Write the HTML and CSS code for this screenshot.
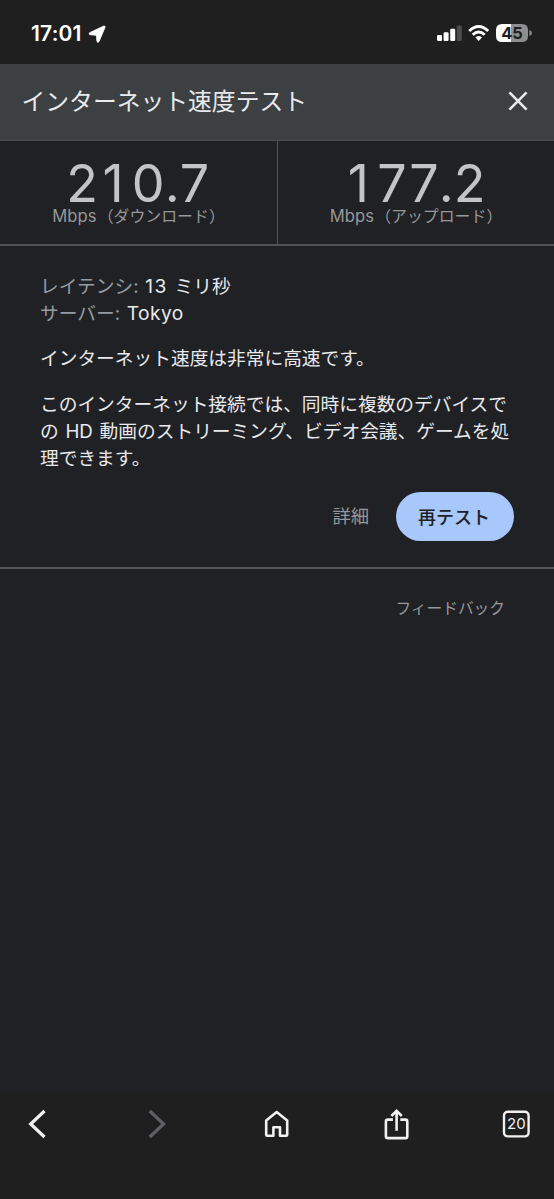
FILE: index.html
```html
<!DOCTYPE html>
<html lang="ja">
<head>
<meta charset="utf-8">
<title>インターネット速度テスト</title>
<link rel="stylesheet" href="styles.css">
</head>
<body>
<div class="screen">
  <div class="status">
    <span class="clock">17:01</span>
    <svg class="location" width="18" height="18" viewBox="0 0 18 18"><path d="M1.6 7.7 15.7 1.1Q17.6.6 17 2.5L11 16.6Q9.8 18.2 8.9 16.5L8.4 10.3 2 9.7Q.2 9 1.6 7.7Z" fill="#fff" stroke="#fff" stroke-width=".8"/></svg>
    <svg class="signals" width="96" height="20" viewBox="0 0 96 20">
      <g fill="#fff"><rect x="0" y="11" width="5" height="6" rx="1.2"/><rect x="6.6" y="8.2" width="5" height="8.8" rx="1.2"/><rect x="13.2" y="4.8" width="5" height="12.2" rx="1.2"/></g>
      <rect x="19.8" y="1.5" width="5" height="15.5" rx="1.2" fill="#4c4c4c"/>
      <g fill="none" stroke="#fff" stroke-width="2.9"><path d="M32.2 7Q41.7-2 51.2 7"/><path d="M35.7 10.8Q41.7 5.3 47.7 10.8"/></g>
      <path d="M38.4 13.4Q41.7 10.6 45 13.4L41.7 17Z" fill="#fff"/>
      <path d="M74 0H65Q59 0 59 6V12Q59 18 65 18H74Z" fill="#fff"/>
      <path d="M74 0H85Q91 0 91 6V12Q91 18 85 18H74Z" fill="#8e8e8e"/>
      <path d="M92.4 6Q95 7 95 9T92.4 12Z" fill="#8e8e8e"/>
      <text x="75" y="14.8" text-anchor="middle" class="battery">45</text>
    </svg>
  </div>
  <header class="header">
    <h1 class="title">インターネット速度テスト</h1>
    <svg class="close" width="20" height="20" viewBox="0 0 20 20"><path d="M1.4 1.4 18.6 18.6M18.6 1.4 1.4 18.6" stroke="#e8eaed" stroke-width="2.6"/></svg>
  </header>
  <section class="results">
    <div class="result"><div class="value">2<span class="one">1</span>0<span class="dot">.</span>7</div><div class="unit"><span class="mbps">Mbps</span>（ダウンロード）</div></div>
    <div class="result"><div class="value"><span class="one">1</span>77<span class="dot">.</span>2</div><div class="unit"><span class="mbps">Mbps</span>（アップロード）</div></div>
  </section>
  <section class="details">
    <div class="row"><span class="label">レイテンシ:</span> <span class="latin number">13</span> ミリ秒</div>
    <div class="row"><span class="label">サーバー:</span> <span class="latin">Tokyo</span></div>
    <p class="text">インターネット速度は非常に高速です。</p>
    <p class="text advice">このインターネット接続では、同時に複数のデバイスで<br>の HD 動画のストリーミング、ビデオ会議、ゲームを処<br>理できます。</p>
    <div class="actions"><span class="more">詳細</span><button class="retest">再テスト</button></div>
  </section>
  <div class="feedback">フィードバック</div>
  <nav class="toolbar">
    <svg width="32" height="32" viewBox="0 0 32 32"><path d="M22.5 3 8.7 16 22.5 29" fill="none" stroke="#f1f1f1" stroke-width="3.2"/></svg>
    <svg width="32" height="32" viewBox="0 0 32 32"><path d="M7.8 3 21.6 16 7.8 29" fill="none" stroke="#5f6063" stroke-width="3.2"/></svg>
    <svg width="32" height="32" viewBox="0 0 32 32"><path d="M5.2 12.5 15.7 4 26.2 12.5V26.5Q26.2 27.7 25 27.7H19V19.2H12.4V27.7H6.4Q5.2 27.7 5.2 26.5Z" fill="none" stroke="#f1f1f1" stroke-width="2.6" stroke-linejoin="round"/></svg>
    <svg width="32" height="32" viewBox="0 0 32 32"><g fill="none" stroke="#f1f1f1" stroke-width="2.6"><path d="M11.9 11.6H6.8Q4.9 11.6 4.9 13.5V28.2Q4.9 30.1 6.8 30.1H24.4Q26.3 30.1 26.3 28.2V13.5Q26.3 11.6 24.4 11.6H19.3"/><path d="M15.6 22.8V3.2M10.4 8 15.6 2.8 20.8 8"/></g></svg>
    <svg width="32" height="32" viewBox="0 0 32 32"><rect x="4" y="3.8" width="24.6" height="24.6" rx="3.8" fill="none" stroke="#f1f1f1" stroke-width="2.4"/><text x="16.4" y="21.3" text-anchor="middle" class="tabs">20</text></svg>
  </nav>
</div>
</body>
</html>
```
FILE: styles.css
```css
* { box-sizing: border-box; }
body { margin: 0; background: #202124; font-family: Inter, "Noto Sans CJK JP", sans-serif; color: #e8eaed; }
.screen { width: 554px; height: 1199px; display: flex; flex-direction: column; overflow: hidden; }
.status { height: 64px; flex: none; background: #1f1f1f; display: flex; align-items: center; padding: 3px 21px 0 31px; }
.clock { width: 53px; font-size: 21px; font-weight: 600; color: #fff; letter-spacing: .2px; line-height: 26px; }
.location { margin-left: 4px; }
.signals { margin-left: auto; }
.battery { font: 700 16.5px Inter, sans-serif; fill: #1f1f1f; }
.header { height: 77px; flex: none; background: #3c4043; border-bottom: 1px solid #4b4e51; display: flex; align-items: center; justify-content: space-between; padding: 0 26px 3px 21.5px; }
.title { margin: 0 0 2px; font-family: "Noto Sans CJK JP", sans-serif; font-size: 23.8px; font-weight: 400; line-height: 36px; white-space: nowrap; }
.results { height: 105px; flex: none; display: grid; grid-template-columns: 277px 277px; border-bottom: 2px solid #505255; }
.result { text-align: center; padding-top: 23px; white-space: nowrap; }
.result + .result { border-left: 1px solid #505255; }
.value { font-size: 52px; line-height: 40px; letter-spacing: 1.6px; color: #c3c4c5; }
.one { padding: 0 6.5px 0 3px; }
.dot { margin: 0 -1.5px; }
.unit { font-size: 15.9px; line-height: 20px; margin-top: 2px; color: #96989b; }
.mbps { font-size: 16.6px; letter-spacing: .1px; margin-right: 1px; }
.details { height: 323px; flex: none; padding: 27px 40px 0; border-bottom: 2px solid #505255; font-size: 18.72px; line-height: 27px; white-space: nowrap; word-spacing: 1.5px; }
.label { color: #969ba1; }
.latin { font-size: 19.2px; letter-spacing: .4px; line-height: 1; }
.number { letter-spacing: 1.4px; }
.text { margin: 18px 0 0; }
.advice { margin-top: 19px; }
.actions { display: flex; justify-content: flex-end; align-items: center; gap: 27px; margin-top: 20px; }
.more { color: #96989b; font-size: 18.3px; margin-bottom: 1px; }
.retest { width: 118px; height: 49px; border: 0; border-radius: 25px; background: #a8c7fa; color: #202124; font: 500 18px "Noto Sans CJK JP", sans-serif; padding: 0 2px 2px 0; }
.feedback { text-align: right; padding: 27px 49px 0; font-size: 15.7px; line-height: 26px; color: #96989b; }
.toolbar { height: 107px; margin-top: auto; flex: none; background: #1f1f1f; display: flex; justify-content: space-between; align-items: flex-start; padding: 16px 22px 0; }
.tabs { font: 400 15px Inter, sans-serif; fill: #f1f1f1; }
```
